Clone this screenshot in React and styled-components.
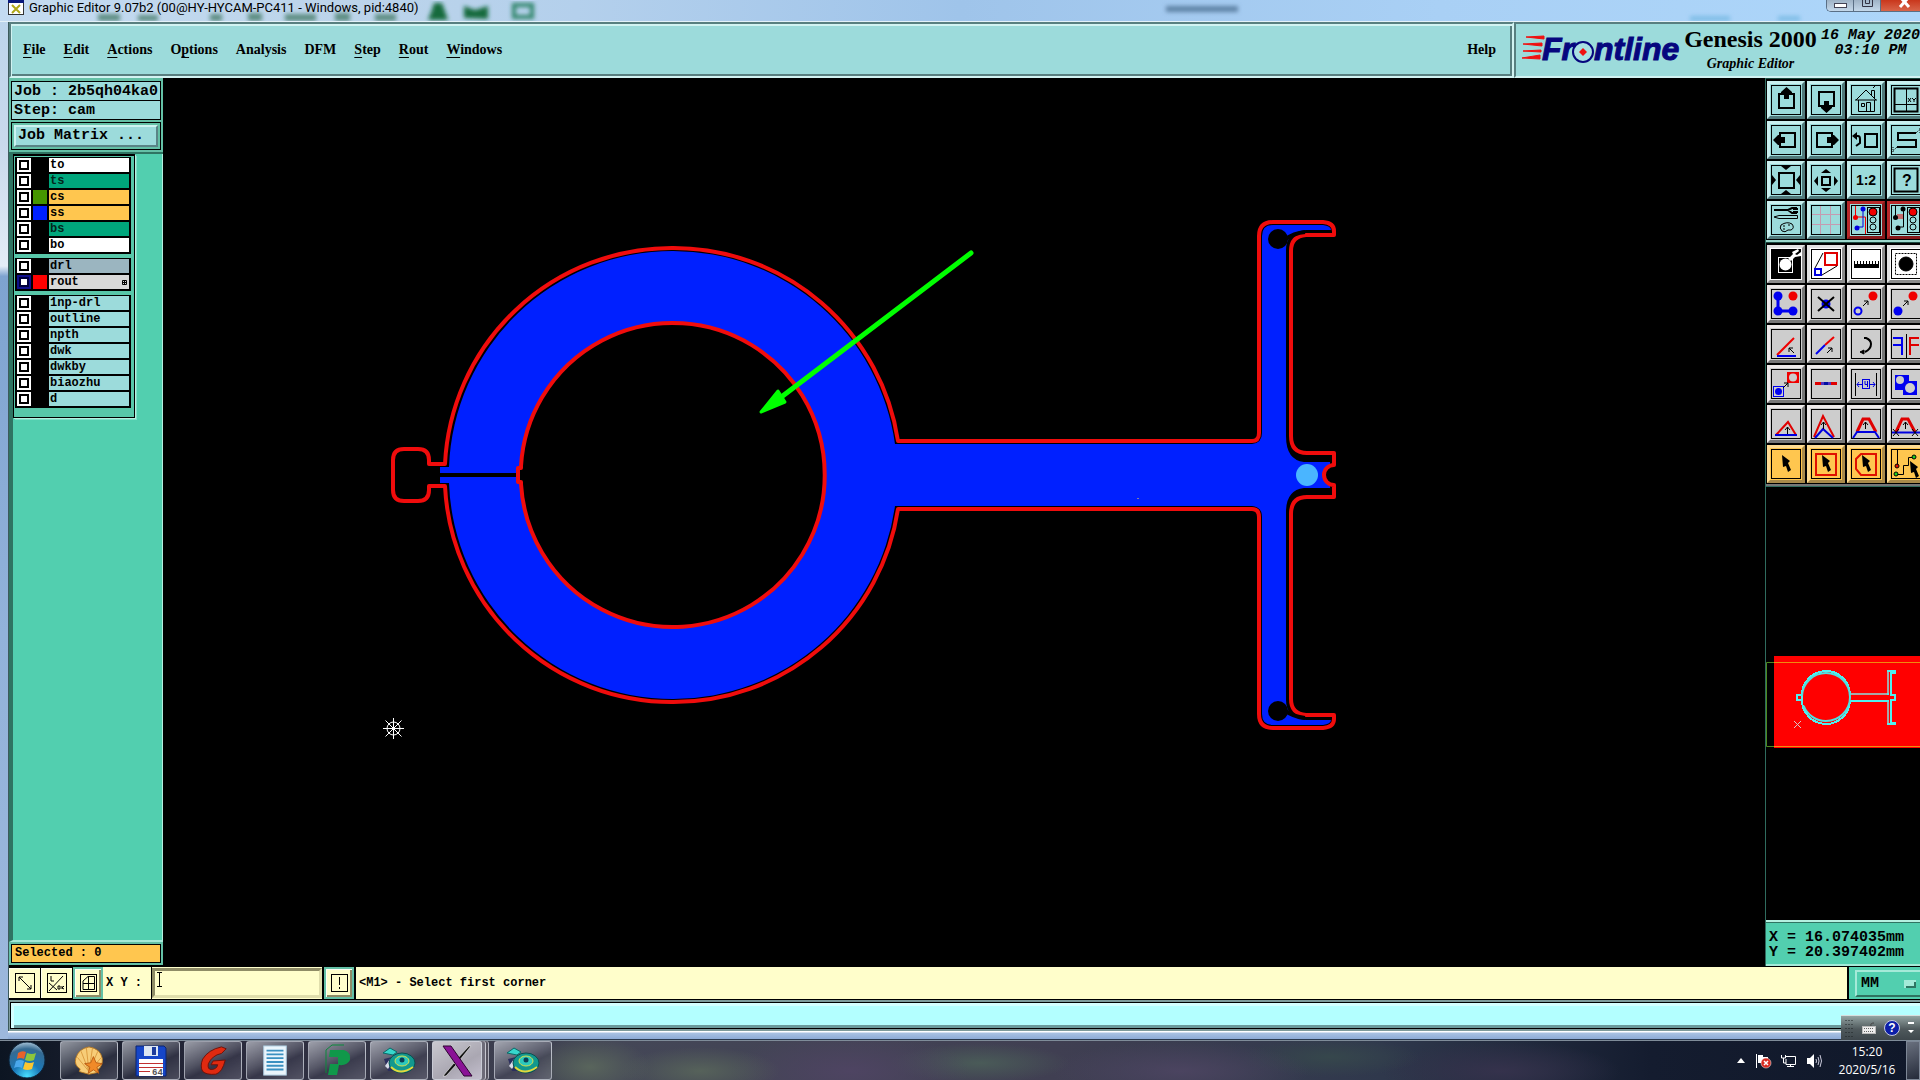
import React, { useState } from "react";
import styled, { createGlobalStyle, css } from "styled-components";

const GlobalStyle = createGlobalStyle`
  * {
    box-sizing: border-box;
  }
  body {
    margin: 0;
    background: #000;
    overflow: hidden;
  }
  button, input, select {
    font: inherit;
    color: inherit;
    margin: 0;
    border-radius: 0;
  }
`;

const serif = `"Liberation Serif", serif`;
const mono = `"Liberation Mono", monospace`;
const sans = `"Open Sans", "Noto Sans", sans-serif`;

const Screen = styled.div`
  display: flex;
  flex-direction: column;
  height: 100vh;
  overflow: hidden;
  color: #000;
`;

/* ---------- window frame ---------- */

const TitleBar = styled.header`
  position: relative;
  flex: none;
  display: flex;
  align-items: flex-start;
  height: 22px;
  padding-left: 8px;
  background: linear-gradient(90deg, #c4dbf1 0, #bcd4ea 18%, #b4d0ec 30%, #9fc4ea 50%, #a9d0f5 75%, #add6fa 100%);
  border-bottom: 1px solid #e4f1f8;
`;

const TitleSmudges = styled.svg`
  position: absolute;
  left: 0;
  top: 0;
  width: 100%;
  height: 21px;
`;

const TitleIcon = styled.svg`
  position: relative;
  flex: none;
  width: 16px;
  height: 16px;
  margin-right: 5px;
`;

const TitleText = styled.h1`
  position: relative;
  flex: 1;
  margin: 0;
  font: 400 13px/15px Roboto, sans-serif;
  white-space: nowrap;
`;

const Captions = styled.div`
  position: relative;
  flex: none;
  display: flex;
  width: 94px;
  height: 12px;
  overflow: hidden;
  border: 1px solid #5a6f85;
  border-width: 0 0 1px 1px;
  border-radius: 0 0 0 5px;
`;

const CaptionButton = styled.button`
  flex: none;
  width: ${(p) => (p.$close ? 48 : 27)}px;
  height: 11px;
  padding: 0;
  border: 0;
  border-right: 1px solid #5a6f85;
  background: ${(p) => (p.$close ? "linear-gradient(#c9371c, #d8654a)" : "linear-gradient(#9fb3c6, #c4d8ea)")};

  svg {
    display: block;
    margin: 0 auto;
  }
`;

const WindowBody = styled.main`
  flex: 1;
  min-height: 0;
  display: flex;
  flex-direction: column;
  padding-left: 8px;
  background: linear-gradient(#bdd5ec 0, #c9d9ec 12%, #e4ecf6 24%, #7ea3d0 25%, #92b2da 60%, #9db8dc 100%);
  border-bottom: 1px solid #2c3c50;
`;

const Client = styled.div`
  flex: 1;
  min-height: 0;
  display: flex;
  flex-direction: column;
  border-left: 1px solid #3c5a5c;
  background: #000;
`;

const WindowFoot = styled.div`
  flex: none;
  height: 8px;
  background: linear-gradient(#fff 0, #fff 1px, #a9c2e2 2px, #8dabd6 100%);
`;

/* ---------- menu bar ---------- */

const Header = styled.div`
  flex: none;
  display: flex;
  height: 56px;
`;

const bevel = css`
  background: #9cdbdb;
  border: 2px solid;
  border-color: #587f80 #d2f3f2 #d2f3f2 #587f80;
`;

const MenuBar = styled.nav`
  ${bevel}
  flex: 1;
  display: flex;
  align-items: center;
  gap: 18px;
  padding: 0 16px 1px 12px;
  box-shadow: inset 1px 2px #d2f3f2, inset -2px -2px #587f80;
`;

const MenuButton = styled.button`
  padding: 0;
  border: 0;
  background: none;
  font: 700 14px/20px ${serif};

  &:last-child {
    margin-left: auto;
  }

  u {
    text-underline-offset: 3px;
    text-decoration-thickness: 1px;
  }
`;

const Brand = styled.div`
  ${bevel}
  flex: none;
  display: flex;
  width: 406px;
  padding-left: 6px;
  border-right: 0;
`;

const Logo = styled.svg`
  flex: none;
  width: 162px;
  height: 52px;
`;

const Product = styled.div`
  flex: none;
  width: 133px;
  text-align: center;
  white-space: nowrap;
`;

const ProductName = styled.div`
  font: 700 24px/30px ${serif};
`;

const ProductPart = styled.div`
  font: italic 700 14px/20px ${serif};
`;

const Stamp = styled.time`
  flex: 1;
  padding-top: 4px;
  padding-left: 4px;
  font: italic 700 15px/15px ${mono};
  text-align: center;
  white-space: nowrap;
`;

/* ---------- work area ---------- */

const Work = styled.div`
  flex: 1;
  min-height: 0;
  display: grid;
  grid-template-columns: 154px minmax(0, 1fr) 155px;
`;

const Sidebar = styled.aside`
  display: flex;
  flex-direction: column;
  min-height: 0;
  margin-bottom: 2px;
  background: #52cfaf;
`;

const JobPanel = styled.div`
  flex: none;
  display: flex;
  flex-direction: column;
  padding: 3px 2px 2px;
  background: #64c0a6;
  border-bottom: 2px solid #2f7462;
`;

const JobLine = styled.div`
  height: 20px;
  margin-bottom: -1px;
  padding-left: 2px;
  border: 1px solid #000;
  background: #9cdbdb;
  font: 700 15px/19px ${mono};
  white-space: nowrap;
`;

const MatrixFrame = styled.div`
  margin-top: 3px;
  padding: 2px;
  border: 1px solid #000;
`;

const MatrixButton = styled.button`
  display: block;
  width: 100%;
  height: 22px;
  padding: 0 2px;
  border: 2px solid;
  border-color: #cdf3f1 #5a8486 #5a8486 #cdf3f1;
  background: #9cdbdb;
  font: 700 15px/18px ${mono};
  text-align: left;
`;

const LayerArea = styled.div`
  flex: 1;
  border-left: 4px solid #2f7462;
  border-right: 1px solid #b5f0e0;
  border-bottom: 2px solid #a4ead8;
`;

const LayerPanel = styled.div`
  width: 122px;
  padding-bottom: 9px;
  background: #58c7a9;
  border: 1px solid #000;
  border-top-width: 2px;
  box-shadow: 1px 1px #b5f0e0, 2px 2px #7fe0c8;
`;

const LayerGroup = styled.ul`
  display: flex;
  flex-direction: column;
  margin: 1px 3px 4px 1px;
  padding: 1px 2px 0;
  list-style: none;
  background: #000;

  &:last-child {
    margin-bottom: 0;
  }
`;

const LayerRow = styled.li`
  display: grid;
  grid-template-columns: 14px 14px 1fr;
  gap: 2px;
  height: 16px;
  padding-bottom: 2px;
`;

const LayerCheck = styled.input`
  appearance: none;
  width: 14px;
  height: 14px;
  border: 2px solid ${(p) => (p.$active ? "#10108c" : "#fff")};
  background: #fff;
  outline: 2px solid ${(p) => (p.$active ? "#00003c" : "#000")};
  outline-offset: -4px;
`;

const Swatch = styled.span`
  background: ${(p) => p.$color};
`;

const LayerName = styled.label`
  display: flex;
  align-items: center;
  justify-content: space-between;
  padding: 0 2px 0 1px;
  background: ${(p) => p.$bg};
  color: ${(p) => p.$fg || "#000"};
  font: 700 12px/14px ${mono};
`;

const SelectedBox = styled.div`
  flex: none;
  padding: 2px;
  background: #64c0a6;
`;

const SelectedCount = styled.div`
  height: 19px;
  padding-left: 3px;
  border: 1px solid #000;
  background: #ffc64f;
  font: 700 12px/17px ${mono};
`;

const Canvas = styled.svg`
  display: block;
  width: 100%;
  height: 100%;
  background: #000;
`;

/* ---------- tools ---------- */

const RightPane = styled.aside`
  display: flex;
  flex-direction: column;
  overflow: hidden;
  border-left: 1px solid #2f6b5e;
  margin-bottom: 1px;
`;

const ToolGrid = styled.div`
  flex: none;
  display: grid;
  grid-template-columns: repeat(4, 38px);
  gap: 2px;
  padding: 2px 0 1px 1px;
  border-bottom: 2px solid ${(p) => p.$edge};
  border-top: 1px solid #1c4a40;
`;

const toneColors = {
  teal: ["#9cdbdb", "#c9f0ef", "#527a7b"],
  red: ["#9cdbdb", "#b8292b", "#86181a"],
  white: ["#fff", "#e2e2e2", "#8c8c8c"],
  gray: ["#cdcdcd", "#eeeaea", "#777"],
  orange: ["#ffc64f", "#ffdc93", "#a98a4a"],
};

const ToolButton = styled.button`
  width: 38px;
  height: 38px;
  padding: 1px;
  border: 3px solid;
  border-color: ${({ $tone }) => {
    const [, light, dark] = toneColors[$tone];
    return `${light} ${dark} ${dark} ${light}`;
  }};
  background: ${(p) => toneColors[p.$tone][0]};

  svg {
    display: block;
    width: 30px;
    height: 30px;
  }
`;

const Overview = styled.div`
  flex: 1;
  min-height: 0;
  padding-top: 169px;
  border-top: 1px solid #2f6b5e;
  background: #000;

  svg {
    display: block;
    width: 154px;
    height: 94px;
  }
`;

const Coordinates = styled.output`
  flex: none;
  display: block;
  height: 46px;
  padding: 8px 0 0 3px;
  border-top: 2px solid #b5f0e0;
  border-bottom: 2px solid #a4ead8;
  box-shadow: inset 0 1px #2f7462;
  background: #52cfaf;
  font: 700 15px/15px ${mono};
  white-space: pre;
`;

/* ---------- command line ---------- */

const CommandRow = styled.form`
  flex: none;
  display: flex;
  height: 33px;
  background: #fffecb;
  border-bottom: 1px solid #000;
`;

const CommandButton = styled.button`
  flex: none;
  width: 32px;
  padding: 2px;
  border: 1px solid #000;
  border-left: 0;
  background: #fffecb;
  box-shadow: inset 1px 1px #fffff0;
  ${(p) =>
    p.$pressed &&
    css`
      width: 30px;
      padding: 1px;
      border: 2px solid #64c0a6;
      box-shadow: inset 1px 1px #fffff5, inset -2px -2px #8f8c66;
    `}

  svg {
    display: block;
    margin: 0 auto;
    width: 24px;
    height: 24px;
  }
`;

const CommandLabel = styled.label`
  flex: none;
  width: 48px;
  padding-left: 3px;
  font: 700 12px/33px ${mono};
  white-space: pre;
`;

const CommandField = styled.div`
  position: relative;
  flex: none;
  display: flex;
  width: 173px;
  padding: 1px 0;
  border-left: 1px solid #000;
  border-right: 2px solid #000;

  svg {
    position: absolute;
    left: 5px;
    top: 5px;
    pointer-events: none;
  }
`;

const CommandInput = styled.input`
  width: 100%;
  padding: 0 4px;
  border: 3px solid;
  border-color: #8f8c66 #e0deac #e0deac #8f8c66;
  background: #fffecb;
  outline: 0;
  font: 700 12px/20px ${mono};
`;

const Message = styled.div`
  flex: 1;
  padding-left: 3px;
  border-left: 2px solid #000;
  border-right: 2px solid #000;
  font: 700 12px/33px ${mono};
`;

const Units = styled.div`
  position: relative;
  flex: none;
  width: 71px;
  padding: 3px 0 2px 6px;
  overflow: hidden;
  background: #52cfaf;

  svg {
    position: absolute;
    left: 55px;
    top: 13px;
    pointer-events: none;
  }
`;

const UnitSelect = styled.select`
  appearance: none;
  width: 80px;
  height: 27px;
  padding: 0 4px;
  border: 2px solid;
  border-color: #a4ead8 #2f7462 #2f7462 #a4ead8;
  background: #52cfaf;
  font: 700 15px/22px ${mono};
`;

const StatusRow = styled.div`
  flex: none;
  height: 31px;
  padding: 2px 0 2px 1px;
  background: #7e9b9b;

  div {
    height: 27px;
    border: 1px solid #000;
    border-right: 0;
    background: #b3ffff;
    box-shadow: inset 3px 3px #d4ffff, inset 0 -3px #6b9b9c;
  }
`;

/* ---------- taskbar ---------- */

const Taskbar = styled.footer`
  position: relative;
  flex: none;
  display: flex;
  align-items: stretch;
  height: 40px;
  padding-left: 7px;
  border-top: 1px solid #7f8c99;
  background:
    radial-gradient(60px 30px at 590px 26px, #59655c 0, transparent 100%),
    radial-gradient(80px 24px at 700px 30px, #56625a 0, transparent 100%),
    radial-gradient(120px 40px at 850px 30px, #4e4462 0, transparent 100%),
    radial-gradient(90px 20px at 980px 22px, #4a5b58 0, transparent 100%),
    radial-gradient(130px 30px at 1180px 30px, #4b4460 0, transparent 100%),
    radial-gradient(90px 20px at 1330px 16px, #36474c 0, transparent 100%),
    radial-gradient(120px 30px at 1500px 30px, #35324c 0, transparent 100%),
    linear-gradient(90deg, #0c1522 0, #2a2a3c 12%, #444757 32%, #403f52 55%, #2f384c 72%, #141c2f 86%, #10182a 100%);
`;

const StartButton = styled.button`
  flex: none;
  width: 53px;
  padding: 0;
  border: 0;
  background: none;
  text-align: left;

  svg {
    display: block;
  }
`;

const TaskList = styled.div`
  flex: 1;
  display: flex;
  gap: 4px;
`;

const TaskButton = styled.button`
  display: flex;
  align-items: center;
  justify-content: center;
  width: 58px;
  height: 39px;
  padding: 0;
  border: 1px solid rgba(210, 215, 225, 0.65);
  border-radius: 3px;
  background: ${(p) =>
    p.$active
      ? "linear-gradient(150deg, #c9c8cf, #aaa7b2 60%, #c4bfce)"
      : "linear-gradient(155deg, rgba(225,228,235,.62), rgba(150,152,165,.38) 45%, rgba(80,80,100,.3) 60%, rgba(150,150,165,.35))"};
  ${(p) =>
    p.$active &&
    css`
      width: 50px;
      margin-right: 8px;
      box-shadow: 3px 0 0 #6d6b78, 4px 0 0 #c7c7d0, 6px 0 0 #55535f, 7px 0 0 #b0b0bb;
    `}
`;

const Tray = styled.div`
  flex: none;
  display: flex;
  align-items: center;
  gap: 9px;
  margin-right: 6px;
`;

const TrayButton = styled.button`
  display: flex;
  padding: 0;
  border: 0;
  background: none;
`;

const Clock = styled.time`
  flex: none;
  width: 78px;
  color: #fff;
  font: 400 12px/18px ${sans};
  padding-top: 2px;
  text-align: center;
`;

const ShowDesktop = styled.button`
  flex: none;
  width: 14px;
  padding: 0;
  border: 1px solid #7d8796;
  background: linear-gradient(160deg, #69707e, #252b3a);
`;

const LanguageBar = styled.div`
  position: absolute;
  right: 0;
  top: -26px;
  display: flex;
  align-items: center;
  gap: 8px;
  width: 79px;
  height: 25px;
  padding-left: 4px;
  border-top: 1px solid #d7dedd;
  background: linear-gradient(#93a3a2, #4f595c 55%, #3e474c);
`;

/* ---------- icons ---------- */

const Frame = ({ children }) => (
  <svg viewBox="0 0 30 30" fill="none" stroke="#000" aria-hidden="true">
    <rect x="0.5" y="0.5" width="29" height="29" />
    {children}
  </svg>
);

const Cursor = ({ x = 11, y = 6 }) => (
  <path
    transform={`translate(${x} ${y})`}
    d="M0 0 L8 6 L6 8 L9 15 L6 17 L4 11 L1 12 Z"
    fill="#000"
    stroke="none"
  />
);

const SmallArrow = ({ x, y, d = "ne" }) => (
  <path
    transform={`translate(${x} ${y})`}
    d={d === "ne" ? "M0 5 L5 0 M1 0 H5 V4" : d === "nw" ? "M5 5 L0 0 M0 4 V0 H4" : "M2.5 7 V0 M0 3 L2.5 0 L5 3"}
  />
);

const TrafficLight = () => (
  <g>
    <rect x="16.5" y="2.5" width="12" height="25" />
    <circle cx="22" cy="7" r="4" fill="#f00000" />
    <circle cx="22" cy="15" r="3" />
    <circle cx="22" cy="22" r="3" />
  </g>
);

const viewTools = [
  ["Pan up", "teal", <Frame>
    <rect x="8" y="9" width="15" height="14" strokeWidth="2" />
    <path d="M15.5 2 L21 7 V9 H18 V14 H13 V9 H10 V7 Z" fill="#000" stroke="none" />
  </Frame>],
  ["Pan down", "teal", <Frame>
    <rect x="8" y="7" width="15" height="14" strokeWidth="2" />
    <path d="M15.5 28 L21 23 V21 H18 V16 H13 V21 H10 V23 Z" fill="#000" stroke="none" />
  </Frame>],
  ["Home", "teal", <Frame>
    <path d="M5 15 L15 5 L25 15 M4 15 H26 M7.5 15 V26.5 H23.5 V15 M15.5 26 V17.5 H19.5 V26 M10.5 18.5 H13.5 V21.5 H10.5 Z M20.5 10 V5.5 H23.5 V13 M22 3 L24 1" />
  </Frame>],
  ["Zoom window", "teal", <Frame>
    <rect x="3.5" y="3.5" width="23" height="23" strokeWidth="2" />
    <path d="M15.5 3 V26 M3 19.5 H27" />
    <path d="M17 13 L20 17 M20 13 L17 17 M21 13 L23 15 L25 13 M23 15 V17" />
  </Frame>],
  ["Pan left", "teal", <Frame>
    <rect x="9" y="8" width="15" height="14" strokeWidth="2" />
    <path d="M2 15 L7 10 H9 V12 H14 V18 H9 V20 H7 Z" fill="#000" stroke="none" />
  </Frame>],
  ["Pan right", "teal", <Frame>
    <rect x="6" y="8" width="15" height="14" strokeWidth="2" />
    <path d="M28 15 L23 10 H21 V12 H16 V18 H21 V20 H23 Z" fill="#000" stroke="none" />
  </Frame>],
  ["Previous view", "teal", <Frame>
    <rect x="14" y="9" width="12" height="13" strokeWidth="2" />
    <path d="M4 11 H7 Q9 11 9 14 V18 L5 21" strokeWidth="2" />
    <path d="M1 11 L6 7 V15 Z" fill="#000" stroke="none" />
  </Frame>],
  ["Serpentine", "teal", <Frame>
    <path d="M25 8 H7 V15 H25 V22 H6" strokeWidth="2" />
    <path d="M25 8 L29 4 M29 8 V3 M6 22 L2 26 M2 22 V27" strokeDasharray="1 1" />
  </Frame>],
  ["Zoom in", "teal", <Frame>
    <rect x="8" y="8" width="15" height="15" strokeWidth="2" />
    <path d="M10 1 H20 L15 5 Z M10 29 H20 L15 25 Z M1 10 V20 L5 15 Z M29 10 V20 L25 15 Z" fill="#000" stroke="none" />
  </Frame>],
  ["Zoom out", "teal", <Frame>
    <rect x="11" y="12" width="8" height="8" strokeWidth="2" />
    <path d="M10 8 H20 L15 4 Z M10 23 H20 L15 27 Z M7 11 V21 L3 16 Z M23 11 V21 L27 16 Z" fill="#000" stroke="none" />
  </Frame>],
  ["Scale one to two", "teal", <Frame>
    <text x="15" y="20" textAnchor="middle" fontFamily="Liberation Sans, sans-serif" fontWeight="700" fontSize="14" fill="#000" stroke="none">1:2</text>
  </Frame>],
  ["Query", "teal", <Frame>
    <rect x="3.5" y="3.5" width="23" height="23" strokeWidth="2" />
    <text x="16" y="21" textAnchor="middle" fontFamily="Liberation Sans, sans-serif" fontWeight="700" fontSize="16" fill="#000" stroke="none">?</text>
  </Frame>],
  ["Setup", "teal", <Frame>
    <path d="M3 5 H17" strokeWidth="2" />
    <path d="M26 3 H21 L17 5 L21 8 H26 M26 3 V4 H22 M26 8 V7 H22" strokeWidth="2" />
    <path d="M3 12 L8 10.5 H26.5 V13.5 H8 Z" />
    <path d="M10 20 Q16 16 21 19 Q24 23 20 25 H17 Q14 28 11 26 Q8 23 10 20 Z M12 21 H14 M17 20 H19 M12 24 H14" />
  </Frame>],
  ["Grid", "teal", <Frame>
    <path d="M9.5 1 V29 M19.5 1 V29 M1 9.5 H29 M1 19.5 H29" stroke="#c59ab0" />
  </Frame>],
  ["Net check", "red", <Frame>
    <path d="M4.5 1 V12 H14.5 V29" stroke="#f00000" />
    <path d="M12 4 V22 H6" stroke="#0000e0" />
    <circle cx="12" cy="4" r="2.5" fill="#0000e0" stroke="none" />
    <circle cx="4.5" cy="12.5" r="2.5" fill="#f00000" stroke="none" />
    <circle cx="6" cy="23" r="2.5" fill="#0000e0" stroke="none" />
    <TrafficLight />
  </Frame>],
  ["Spacing check", "red", <Frame>
    <path d="M4.5 1 V12 M12.5 4 V22 H7" />
    <path d="M7 9 V14 M9 9 V14 M11 9 V14" stroke="#f00000" />
    <circle cx="12" cy="4" r="2.5" fill="#000" stroke="none" />
    <circle cx="4.5" cy="12.5" r="2.5" fill="#000" stroke="none" />
    <circle cx="7" cy="23" r="2.5" fill="#000" stroke="none" />
    <TrafficLight />
  </Frame>],
];

const editTools = [
  ["Invert", "white", <Frame>
    <path d="M1 1 H29 V29 H1 Z" fill="#000" stroke="none" />
    <rect x="7.5" y="8.5" width="14" height="15" stroke="#fff" />
    <circle cx="14.5" cy="15.5" r="6" fill="#fff" stroke="none" />
    <path d="M17 10 L22 5 L21 3 L27 0 L28 2 L24 5 L26 6 L30 3 V7 L24 8 L20 12 Z" fill="#fff" stroke="none" />
  </Frame>],
  ["Scale", "white", <Frame>
    <rect x="14" y="4" width="12" height="12" stroke="#e00000" strokeWidth="2" />
    <rect x="4" y="20" width="6" height="6" stroke="#0000e0" strokeWidth="2" />
    <path d="M4 19 L12 4 M11 26 L26 17" />
  </Frame>],
  ["Measure", "white", <Frame>
    <path d="M3 15 H28 V19 H3 Z" fill="#000" stroke="none" />
    <path d="M3.5 12 V16 M6.5 12 V16 M9.5 12 V16 M12.5 12 V16 M15.5 12 V16 M18.5 12 V16 M21.5 12 V16 M24.5 12 V16 M27.5 12 V16" />
  </Frame>],
  ["Select feature", "white", <Frame>
    <circle cx="15" cy="15" r="7" fill="#000" />
    <rect x="4.5" y="4.5" width="21" height="21" strokeDasharray="2 1" />
  </Frame>],
  ["Net points", "gray", <Frame>
    <path d="M7 7 V22 H22" stroke="#0000f0" strokeWidth="3" />
    <circle cx="7" cy="7" r="4.5" fill="#0000f0" stroke="none" />
    <circle cx="7" cy="22" r="4.5" fill="#0000f0" stroke="none" />
    <circle cx="22" cy="22" r="4.5" fill="#0000f0" stroke="none" />
    <circle cx="22" cy="7" r="4.5" fill="#f00000" stroke="none" />
  </Frame>],
  ["Delete", "gray", <Frame>
    <circle cx="15" cy="15" r="4.5" fill="#0000f0" stroke="none" />
    <path d="M7 8 L23 22 M23 8 L7 22" strokeWidth="2" />
  </Frame>],
  ["Move", "gray", <Frame>
    <circle cx="22" cy="7" r="4.5" fill="#f00000" stroke="none" />
    <circle cx="7" cy="22" r="3.5" stroke="#0000f0" strokeWidth="2" />
    <SmallArrow x={12} y={12} />
  </Frame>],
  ["Copy", "gray", <Frame>
    <circle cx="22" cy="7" r="4.5" fill="#f00000" stroke="none" />
    <circle cx="7" cy="22" r="4.5" fill="#0000f0" stroke="none" />
    <SmallArrow x={12} y={12} />
  </Frame>],
  ["Rotate line", "gray", <Frame>
    <path d="M6 26 L23 9" stroke="#f00000" strokeWidth="2" />
    <path d="M6 27 H25" stroke="#0000f0" strokeWidth="2" />
    <SmallArrow x={18} y={19} d="nw" />
  </Frame>],
  ["Extend line", "gray", <Frame>
    <path d="M14 16 L23 8" stroke="#f00000" strokeWidth="2" />
    <path d="M5 25 L14 16" stroke="#0000f0" strokeWidth="2" />
    <SmallArrow x={16} y={19} />
  </Frame>],
  ["Rotate", "gray", <Frame>
    <path d="M13 9 H15 Q20 11 20 15 Q20 20 14 23" strokeWidth="2" />
    <path d="M9 23 L13 21 V25 Z" fill="#000" />
  </Frame>],
  ["Mirror", "gray", <Frame>
    <path d="M2 9 H11 V26 M11 16 H2" stroke="#0000f0" strokeWidth="2" />
    <path d="M15.5 5 V29" />
    <path d="M28 9 H19 V26 M19 16 H28" stroke="#e00000" strokeWidth="2" />
  </Frame>],
  ["Move to layer", "gray", <Frame>
    <path d="M16 3 H28 V14 H16 Z" fill="#f00000" stroke="none" />
    <circle cx="22" cy="8.5" r="4" fill="#cdcdcd" stroke="none" />
    <rect x="2.5" y="17.5" width="10" height="10" stroke="#0000f0" />
    <circle cx="7.5" cy="22.5" r="3.5" fill="#0000f0" stroke="none" />
    <SmallArrow x={12} y={14} />
  </Frame>],
  ["Join line", "gray", <Frame>
    <path d="M4 14.5 H26" stroke="#e00000" strokeWidth="3" />
    <path d="M10 14.5 H20" stroke="#5030c0" strokeWidth="3" />
    <path d="M13 14.5 H17" stroke="#0010a0" strokeWidth="3" />
  </Frame>],
  ["Resize gap", "gray", <Frame>
    <path d="M4.5 4 V27 M25.5 4 V27" />
    <path d="M6 15.5 H11 M19 15.5 H24 M8 13 L6 15.5 L8 18 M22 13 L24 15.5 L22 18" stroke="#0000e0" />
    <rect x="11.5" y="10.5" width="7" height="9" stroke="#0000e0" />
    <path d="M14 12 V15.5 H17 M16.5 12 V18" stroke="#0000e0" />
  </Frame>],
  ["Merge", "gray", <Frame>
    <path d="M4 6 H18 V12 H26 V26 H12 V21 H4 Z" fill="#0000f0" stroke="none" />
    <circle cx="9" cy="11" r="4" fill="#cdcdcd" stroke="none" />
    <circle cx="19" cy="19" r="5" fill="#cdcdcd" stroke="none" />
  </Frame>],
  ["Chamfer", "gray", <Frame>
    <path d="M5 26 L17 13 L25 26" stroke="#e00000" strokeWidth="2" />
    <path d="M4 26 H26" stroke="#0000e0" strokeWidth="2" />
    <SmallArrow x={14} y={18} d="n" />
  </Frame>],
  ["Corner", "gray", <Frame>
    <path d="M3 28 L12 7 L23 28" stroke="#e00000" strokeWidth="2" />
    <path d="M4 29 L12 20 L22 29" stroke="#0000e0" strokeWidth="2" />
    <SmallArrow x={10} y={13} d="n" />
  </Frame>],
  ["Slide segment", "gray", <Frame>
    <path d="M6 23 L12 10 H18 L25 23" stroke="#e00000" strokeWidth="3" />
    <path d="M2 29 L6 23 H24 L28 29" stroke="#0000e0" strokeWidth="2" />
    <SmallArrow x={12} y={13} d="n" />
  </Frame>],
  ["Cut segment", "gray", <Frame>
    <path d="M5 23 L11 10 H17 L24 23" stroke="#e00000" strokeWidth="3" />
    <path d="M1 23.5 H29" stroke="#0000e0" strokeWidth="2" />
    <path d="M2 20 L8 27 M8 20 L2 27 M21 20 L27 27 M27 20 L21 27" />
    <SmallArrow x={12} y={13} d="n" />
  </Frame>],
  ["Select single", "orange", <Frame>
    <Cursor />
  </Frame>],
  ["Select by window", "orange", <Frame>
    <rect x="5" y="5" width="20" height="21" stroke="#e01000" strokeWidth="2" />
    <Cursor />
  </Frame>],
  ["Select by polygon", "orange", <Frame>
    <path d="M10 5 H25 V26 H10 L5 20 V10 Z" stroke="#e01000" strokeWidth="2" />
    <Cursor />
  </Frame>],
  ["Select net", "orange", <Frame>
    <path d="M6.5 1 V17 M6 25.5 H12.5 V16.5 H17.5 V8.5 H22" />
    <circle cx="6" cy="17" r="2" fill="#e01000" />
    <circle cx="5" cy="25" r="2" fill="#20d020" />
    <circle cx="23" cy="8" r="2" fill="#20d020" />
    <Cursor x={19} y={12} />
  </Frame>],
];

const tasks = [
  ["Shells", <svg width="30" height="32" viewBox="0 0 34 34">
    <path d="M17 32 L6 29 L7 26 Q0 22 2 14 Q5 3 17 1 Q30 3 32 14 Q33 22 27 27 L27 30 Z" fill="#f7cd78" stroke="#b97a20" />
    <path d="M17 29 L4 13 M17 29 L8 6 M17 29 L14 2 M17 29 L21 2 M17 29 L27 6 M17 29 L31 13" stroke="#d8963a" />
    <path d="M22 12 L25 19 L32 20 L26 24 L28 31 L22 27 L16 31 L18 24 L12 20 L19 19 Z" fill="#f08a28" stroke="#b65a12" />
  </svg>],
  ["Files", <svg width="32" height="32" viewBox="0 0 32 32">
    <path d="M1 1 H29 L31 3 V31 H1 Z" fill="#1646c8" stroke="#0b2470" />
    <path d="M9 1 H23 V11 H9 Z" fill="#dce6f2" />
    <path d="M17 2 H21 V10 H17 Z" fill="#1d3c9c" />
    <path d="M4 14 H28 V31 H4 Z" fill="#fff" />
    <path d="M4 18.5 H28 M4 22.5 H28 M4 26.5 H15" stroke="#c03030" />
    <path d="M16 23 H28 V31 H16 Z" fill="#fff" />
    <text x="17" y="30" fontSize="9" fontFamily="Liberation Mono, monospace" fontWeight="700" fill="#555">64</text>
  </svg>],
  ["Gerber", <svg width="32" height="34" viewBox="0 0 34 34">
    <path d="M31 4 L26 2 Q12 5 6 15 Q3 23 6 28 Q10 32 20 31 Q27 29 30 16 L17 17 L15 21 L22 21 Q21 26 15 26 Q11 26 12 20 Q16 11 26 9 Z" fill="#e02a10" stroke="#6f1008" />
  </svg>],
  ["Notepad", <svg width="28" height="32" viewBox="0 0 28 34">
    <rect x="2" y="1" width="24" height="31" fill="#eaf5fc" stroke="#a8c8dc" />
    <path d="M5 6 H23 M5 10 H23 M5 14 H23 M5 18 H23 M5 22 H23 M5 26 H23" stroke="#3a90c0" strokeWidth="2" />
  </svg>],
  ["Planner", <svg width="34" height="34" viewBox="0 0 34 34">
    <path d="M6 29 V6 L12 1 H24" fill="none" stroke="#0b8a3c" />
    <path d="M10 6 H24 Q31 8 30 16 Q27 22 19 21 L17 31 H8 L10 20 H18 V13 H9 Z" fill="#10984a" />
  </svg>],
  ["Genesis", "disc"],
  ["X server", <svg width="34" height="34" viewBox="0 0 34 34">
    <path d="M29 2 H31 L19 17 L17 15 Z M14 19 L16 21 L6 32 H3 Z" fill="#111" stroke="#eee" strokeWidth="0.6" />
    <path d="M3 2 H11 L32 32 H24 Z" fill="#8a1296" stroke="#2c0430" />
  </svg>],
  ["Genesis tools", "disc"],
];

const Disc = () => (
  <svg width="34" height="28" viewBox="0 0 34 28">
    <path d="M2 12 L10 10 L14 24 L6 24 Z" fill="#2c2f5e" />
    <path d="M3 19 L8 12 L11 14 L6 22 Z" fill="#d8dce8" />
    <ellipse cx="20" cy="16" rx="13" ry="10" fill="#12988f" stroke="#0b4f50" />
    <path d="M9 20 Q18 29 31 20" fill="none" stroke="#e3d83c" strokeWidth="2" />
    <ellipse cx="20" cy="14" rx="7" ry="5" fill="#2cc9bd" stroke="#d9e04a" />
    <circle cx="20" cy="13" r="2.5" fill="#0a3f55" />
    <path d="M1 6 L8 1 L15 5 L11 8 Z" fill="#36d6cc" stroke="#0b6a68" />
  </svg>
);

const menus = [
  ["", "F", "ile"],
  ["", "E", "dit"],
  ["", "A", "ctions"],
  ["O", "p", "tions"],
  ["Analysis", "", ""],
  ["DFM", "", ""],
  ["", "S", "tep"],
  ["", "R", "out"],
  ["", "W", "indows"],
  ["Help", "", ""],
];

const layerGroups = [
  [
    { name: "to", bg: "#fff" },
    { name: "ts", bg: "#00a67c", fg: "#04261c" },
    { name: "cs", bg: "#ffc64f", swatch: "#469600" },
    { name: "ss", bg: "#ffc64f", swatch: "#0020ff" },
    { name: "bs", bg: "#00a67c", fg: "#04261c" },
    { name: "bo", bg: "#fff" },
  ],
  [
    { name: "drl", bg: "#9bb5c0" },
    { name: "rout", bg: "#d8d8d8", swatch: "#ff0000", active: true },
  ],
  ["1np-drl", "outline", "npth", "dwk", "dwkby", "biaozhu", "d"].map((name) => ({
    name,
    bg: "#9cdbdb",
  })),
];

function FrontlineLogo() {
  return (
    <Logo viewBox="0 0 162 52" role="img" aria-label="Frontline">
      <path d="M4 13 L22 12 V15 Z M1 20 L20 19 V22 Z M1 27 L19 26 V28 Z M0 34 L18 31 V35 Z" fill="#f01010" stroke="#f01010" />
      <g fontFamily="Liberation Sans, sans-serif" fontWeight="700" fontStyle="italic" fontSize="32" fill="#06067e" stroke="#06067e">
        <text x="20" y="36">Fr</text>
        <text x="72" y="36">ntline</text>
      </g>
      <circle cx="61" cy="28" r="10" fill="#a9e0e2" stroke="#06067e" strokeWidth="2" />
      <path d="M61 24 L65 28 L61 32 L57 28 Z" fill="#f01010" />
    </Logo>
  );
}

function Board() {
  const outline = `M445 464 A227 227 0 0 1 673 248 A227 227 0 0 1 898 441 H1252 Q1259 441 1259 433 V236 Q1259 222 1273 222
    H1323 Q1334 223 1334 231 V235 H1306 Q1291 236 1291 251 V436 Q1291 453 1307 453 H1334 V465
    A10 10 0 0 0 1334 485 V497 H1307 Q1291 497 1291 514 V699 Q1291 714 1306 715 H1334 V719
    Q1334 727 1323 728 H1273 Q1259 728 1259 714 V517 Q1259 509 1252 509 H898
    A227 227 0 0 1 673 702 A227 227 0 0 1 445 486 H429 V490 Q429 501 418 501 H404 Q393 501 393 490 V460
    Q393 449 404 449 H418 Q429 449 429 460 V464 Z`;
  return (
    <Canvas viewBox="163 78 1602 888" preserveAspectRatio="xMinYMin meet" role="img" aria-label="Board view">
      <path
        d="M440 467 H449 A224 224 0 0 1 673 251 A224 224 0 0 1 895 444 H1252 Q1262 443 1262 433 V236 Q1262 225 1273 225 H1323 Q1331 226 1331 230 H1306
          Q1286 232 1286 250 V436 Q1286 460 1304 462 H1330 V466 A12 12 0 0 0 1330 486 V488 H1304 Q1286 490 1286 512 V700
          Q1286 718 1306 720 H1331 Q1331 724 1323 725 H1273 Q1262 725 1262 714 V517 Q1262 507 1252 506 H895
          A224 224 0 0 1 673 699 A224 224 0 0 1 449 483 H440 Z"
        fill="#0020ff"
      />
      <circle cx="673" cy="475" r="149" fill="#000" />
      <path d={outline} fill="none" stroke="#f00c0c" strokeWidth="4" strokeLinejoin="round" />
      <path d="M440 467 H450 V483 H440 Z" fill="#0020ff" />
      <path
        d="M521 466 A152 152 0 1 1 521 484 V482 H518 V468 H521 Z"
        fill="#000"
        stroke="#f00c0c"
        strokeWidth="4"
        strokeLinejoin="round"
      />
      <path d="M440 475 H516" stroke="#000" strokeWidth="4" />
      <circle cx="1278" cy="239" r="10" fill="#000" />
      <circle cx="1278" cy="711" r="10" fill="#000" />
      <path d="M1284 240 Q1294 233 1305 232 M1284 710 Q1294 717 1305 718" fill="none" stroke="#000" strokeWidth="4" />
      <circle cx="1307" cy="475" r="11" fill="#4ab5ff" />
      <path d="M971 253 L780 398" stroke="#00ff00" strokeWidth="5" strokeLinecap="round" />
      <path d="M761 412 L778 391 L785 402 Z" fill="#00ff00" stroke="#00ff00" strokeWidth="3" strokeLinejoin="round" />
      <g fill="none" stroke="#fff">
        <circle cx="393.5" cy="728.5" r="6.5" />
        <path d="M383 728.5 H404 M393.5 718 V739 M385.5 720.5 L401.5 736.5 M401.5 720.5 L385.5 736.5" />
      </g>
      <path d="M1137 498.5 H1139" stroke="#8080a0" />
    </Canvas>
  );
}

function MiniMap() {
  return (
    <svg viewBox="1766 656 154 94" role="img" aria-label="Overview map">
      <path d="M1774 656 H1920 V748 H1774 Z" fill="#ff0000" />
      <path d="M1920 662.5 H1766.5 V746.5 H1920" fill="none" stroke="#4c8a20" />
      <path d="M1774 662.5 H1920 M1774 746.5 H1920" stroke="#f08a10" />
      <g fill="none" stroke="#4ff0f0" strokeWidth="2" shapeRendering="crispEdges">
        <path d="M1802 696 A24 24 0 0 1 1850 694 H1888 V671 H1895 V673 H1891 V695 H1895 V700 H1891 V723 H1895 V724 H1888 V701 H1850 A24 24 0 0 1 1802 699" />
        <path d="M1797 695 H1802 V700 H1797 Z" />
      </g>
      <circle cx="1826" cy="697" r="24" fill="none" stroke="#4fe0e0" strokeWidth="2" strokeDasharray="66 10 75" />
      <path d="M1851 694 H1887 M1888 672 V693 M1888 702 V723" stroke="#a8a8a8" strokeWidth="2" shapeRendering="crispEdges" />
      <path d="M1794 721 L1801 728 M1801 721 L1794 728" stroke="#d8c8c8" />
    </svg>
  );
}

export default function App() {
  const [xy, setXy] = useState("");
  const [units, setUnits] = useState("MM");

  return (
    <Screen>
      <GlobalStyle />
      <TitleBar>
        <TitleSmudges aria-hidden="true">
          <defs>
            <filter id="soft">
              <feGaussianBlur stdDeviation="2" />
            </filter>
          </defs>
          <g filter="url(#soft)">
            <path d="M98 14 H120 V21 H98 Z M138 15 H158 V21 H138 Z M210 14 H222 V21 H210 Z M248 13 H262 V21 H248 Z M285 14 H316 V21 H285 Z M335 13 H350 V21 H335 Z M375 14 H396 V21 H375 Z" fill="#5f8f84" />
            <path d="M428 20 L432 10 L434 3 L442 3 L448 20 Z M464 18 V6 L475 10 L488 6 V19 Z" fill="#126a3c" />
            <path d="M514 5 H532 V17 H514 Z" fill="none" stroke="#2f8468" strokeWidth="4" />
            <path d="M1166 6 H1238 V12 H1166 Z" fill="#5f83a6" />
            <path d="M1690 16 H1730 V21 H1690 Z M1778 16 H1800 V21 H1778 Z" fill="#7fbde6" />
          </g>
        </TitleSmudges>
        <TitleIcon viewBox="0 0 16 16" aria-hidden="true">
          <rect x="0.5" y="0.5" width="15" height="14" fill="#fff" stroke="#333" />
          <path d="M0 0 H16 V3 H0 Z" fill="#0a1a7c" />
          <path d="M4 5 L12 13 M12 5 L4 13" stroke="#b0a818" strokeWidth="2" />
        </TitleIcon>
        <TitleText>Graphic Editor 9.07b2 (00@HY-HYCAM-PC411 - Windows, pid:4840)</TitleText>
        <Captions>
          <CaptionButton aria-label="Minimize">
            <svg width="13" height="11"><rect x="0.5" y="3.5" width="12" height="4" fill="#fff" stroke="#445" /></svg>
          </CaptionButton>
          <CaptionButton aria-label="Restore">
            <svg width="13" height="11"><path d="M1.5 -1 V6.5 H11.5 V-1 M4.5 -1 V3.5 H8.5 V-1" fill="none" stroke="#334" /></svg>
          </CaptionButton>
          <CaptionButton $close aria-label="Close">
            <svg width="13" height="11"><path d="M2 7 L10 -2 M3 -2 L11 7" stroke="#fff" strokeWidth="3" /></svg>
          </CaptionButton>
        </Captions>
      </TitleBar>

      <WindowBody>
        <Client>
          <Header>
            <MenuBar>
              {menus.map(([before, key, after]) => (
                <MenuButton key={before + key + after}>
                  {before}
                  {key && <u>{key}</u>}
                  {after}
                </MenuButton>
              ))}
            </MenuBar>
            <Brand>
              <FrontlineLogo />
              <Product>
                <ProductName>Genesis 2000</ProductName>
                <ProductPart>Graphic Editor</ProductPart>
              </Product>
              <Stamp>
                16 May 2020
                <br />
                03:10 PM
              </Stamp>
            </Brand>
          </Header>

          <Work>
            <Sidebar>
              <JobPanel>
                <JobLine>Job : 2b5qh04ka0</JobLine>
                <JobLine>Step: cam</JobLine>
                <MatrixFrame>
                  <MatrixButton>Job Matrix ...</MatrixButton>
                </MatrixFrame>
              </JobPanel>
              <LayerArea>
                <LayerPanel>
                  {layerGroups.map((group, i) => (
                    <LayerGroup key={i}>
                      {group.map((layer) => (
                        <LayerRow key={layer.name}>
                          <LayerCheck type="checkbox" id={`layer-${layer.name}`} $active={layer.active} />
                          <Swatch $color={layer.swatch || "#000"} />
                          <LayerName htmlFor={`layer-${layer.name}`} $bg={layer.bg} $fg={layer.fg}>
                            {layer.name}
                            {layer.active && (
                              <svg width="5" height="5" aria-hidden="true">
                                <path d="M0.5 0.5 H4.5 V4.5 H0.5 Z M2.5 0 V5 M0 2.5 H5" fill="none" stroke="#000" />
                              </svg>
                            )}
                          </LayerName>
                        </LayerRow>
                      ))}
                    </LayerGroup>
                  ))}
                </LayerPanel>
              </LayerArea>
              <SelectedBox>
                <SelectedCount>Selected : 0</SelectedCount>
              </SelectedBox>
            </Sidebar>

            <Board />

            <RightPane>
              <ToolGrid $edge="#9bd8cc">
                {viewTools.map(([name, tone, icon]) => (
                  <ToolButton key={name} $tone={tone} aria-label={name}>
                    {icon}
                  </ToolButton>
                ))}
              </ToolGrid>
              <ToolGrid $edge="#777">
                {editTools.map(([name, tone, icon]) => (
                  <ToolButton key={name} $tone={tone} aria-label={name}>
                    {icon}
                  </ToolButton>
                ))}
              </ToolGrid>
              <Overview>
                <MiniMap />
              </Overview>
              <Coordinates>{"X = 16.074035mm\nY = 20.397402mm"}</Coordinates>
            </RightPane>
          </Work>

          <CommandRow onSubmit={(e) => e.preventDefault()}>
            <CommandButton type="button" aria-label="Snap to point">
              <svg viewBox="0 0 24 24" fill="none" stroke="#000">
                <rect x="2.5" y="2.5" width="19" height="19" />
                <path d="M6 6 L18 18 M6 10 V6 H10 M18 14 V18 H14" />
              </svg>
            </CommandButton>
            <CommandButton type="button" aria-label="Snap to angle">
              <svg viewBox="0 0 24 24" fill="none" stroke="#000">
                <rect x="2.5" y="2.5" width="19" height="19" />
                <path d="M4 20 L18 5 M6 5 V10 H9 M4 12 L12 19 M13 15 H15 V18 H13 Z M17 15 V18 M19 15 L17 17 L19 18" />
              </svg>
            </CommandButton>
            <CommandButton type="button" $pressed aria-label="Snap to grid">
              <svg viewBox="0 0 24 24" fill="none" stroke="#000">
                <rect x="4.5" y="3.5" width="16" height="17" />
                <path d="M7 18.5 V10 L12 5.5 H18.5 V18.5 Z M12.5 5 V19 M7 12.5 H18" />
              </svg>
            </CommandButton>
            <CommandLabel htmlFor="xy">X Y :</CommandLabel>
            <CommandField>
              <CommandInput id="xy" value={xy} onChange={(e) => setXy(e.target.value)} />
              <svg width="5" height="15" aria-hidden="true">
                <path d="M0 0.5 H5 M2.5 0 V15 M0 14.5 H5" stroke="#000" />
              </svg>
            </CommandField>
            <CommandButton type="button" $pressed aria-label="Stop">
              <svg viewBox="0 0 24 24" fill="none" stroke="#000">
                <rect x="4.5" y="3.5" width="16" height="17" />
                <path d="M12.5 6 V14 M12.5 16 V18" />
              </svg>
            </CommandButton>
            <Message>{"<M1> - Select first corner"}</Message>
            <Units>
              <UnitSelect aria-label="Units" value={units} onChange={(e) => setUnits(e.target.value)}>
                <option>MM</option>
                <option>Inch</option>
              </UnitSelect>
              <svg width="12" height="8" aria-hidden="true">
                <path d="M0 0 H12 V8 H0 Z" fill="#a4ead8" />
                <path d="M2 7 H11 V2" fill="none" stroke="#2f7462" strokeWidth="2" />
              </svg>
            </Units>
          </CommandRow>
          <StatusRow>
            <div />
          </StatusRow>
        </Client>
        <WindowFoot />
      </WindowBody>

      <Taskbar>
        <StartButton aria-label="Start">
          <svg width="40" height="39" viewBox="0 0 40 39">
            <defs>
              <radialGradient id="orb" cx="0.5" cy="0.95" r="0.95">
                <stop offset="0" stopColor="#48e0ff" />
                <stop offset="0.4" stopColor="#1a78b8" />
                <stop offset="0.8" stopColor="#356a92" />
                <stop offset="1" stopColor="#a8c4d8" />
              </radialGradient>
            </defs>
            <circle cx="20" cy="19" r="18" fill="url(#orb)" stroke="#0c2238" />
            <path d="M11 12 Q15 9 19 11 L17 18 Q13 16 10 18 Z" fill="#e8622a" />
            <path d="M20 12 Q25 14 29 12 L27 19 Q23 21 18 19 Z" fill="#8cc63c" />
            <path d="M9 20 Q13 18 17 20 L15 27 Q11 25 7 27 Z" fill="#4aa8ec" />
            <path d="M18 21 Q23 23 27 21 L25 28 Q20 30 16 28 Z" fill="#fcc630" />
          </svg>
        </StartButton>
        <TaskList>
          {tasks.map(([name, icon]) => (
            <TaskButton key={name} $active={name === "X server"} aria-label={name}>
              {icon === "disc" ? <Disc /> : icon}
            </TaskButton>
          ))}
        </TaskList>
        <Tray>
          <TrayButton aria-label="Show hidden icons">
            <svg width="8" height="6"><path d="M0 5 L4 0 L8 5 Z" fill="#fff" /></svg>
          </TrayButton>
          <TrayButton aria-label="Action center">
            <svg width="18" height="16">
              <path d="M2.5 1 V15" stroke="#fff" />
              <path d="M4 2 H9 V4 H14 V10 H4 Z" fill="#fff" />
              <circle cx="12" cy="10" r="5" fill="#d82a20" stroke="#fff" strokeWidth="0.5" />
              <path d="M10 8 L14 12 M14 8 L10 12" stroke="#fff" strokeWidth="1.5" />
            </svg>
          </TrayButton>
          <TrayButton aria-label="Network">
            <svg width="16" height="15" fill="none" stroke="#fff">
              <path d="M5 3.5 H14.5 V11.5 H5 V6 M6 13.5 H13 M9.5 12 V14 M0.5 2 V5 H4.5 V2 M2.5 5 V10 H5" />
            </svg>
          </TrayButton>
          <TrayButton aria-label="Volume">
            <svg width="16" height="14">
              <path d="M1 4 H4 L8 0 V14 L4 10 H1 Z" fill="#fff" />
              <path d="M10 5 Q11 7 10 9 M12 3 Q14 7 12 11 M14 1 Q17 7 14 13" fill="none" stroke="#ccd" />
            </svg>
          </TrayButton>
        </Tray>
        <Clock>
          15:20
          <br />
          2020/5/16
        </Clock>
        <ShowDesktop aria-label="Show desktop" />
        <LanguageBar>
          <svg width="9" height="18" aria-hidden="true">
            <path d="M1 1 V18 M4 1 V18 M7 1 V18" stroke="#1c2224" strokeDasharray="1 3" />
          </svg>
          <svg width="14" height="12" aria-hidden="true">
            <path d="M9 4 Q8 1 12 1" fill="none" stroke="#444" />
            <rect x="0.5" y="4.5" width="13" height="7" fill="#eee" stroke="#bbb" />
            <path d="M2 6.5 H12 M2 9.5 H12" stroke="#666" strokeDasharray="1 1" />
          </svg>
          <svg width="16" height="16" aria-hidden="true">
            <circle cx="8" cy="8" r="7.5" fill="#0c1ea8" stroke="#c8cce0" />
            <text x="8" y="12" textAnchor="middle" fontFamily="Liberation Sans, sans-serif" fontWeight="700" fontSize="12" fill="#fff">?</text>
          </svg>
          <svg width="6" height="14" aria-hidden="true">
            <path d="M0 1 H6 V3 H0 Z M0 9 H6 L3 12 Z" fill="#fff" />
          </svg>
        </LanguageBar>
      </Taskbar>
    </Screen>
  );
}
